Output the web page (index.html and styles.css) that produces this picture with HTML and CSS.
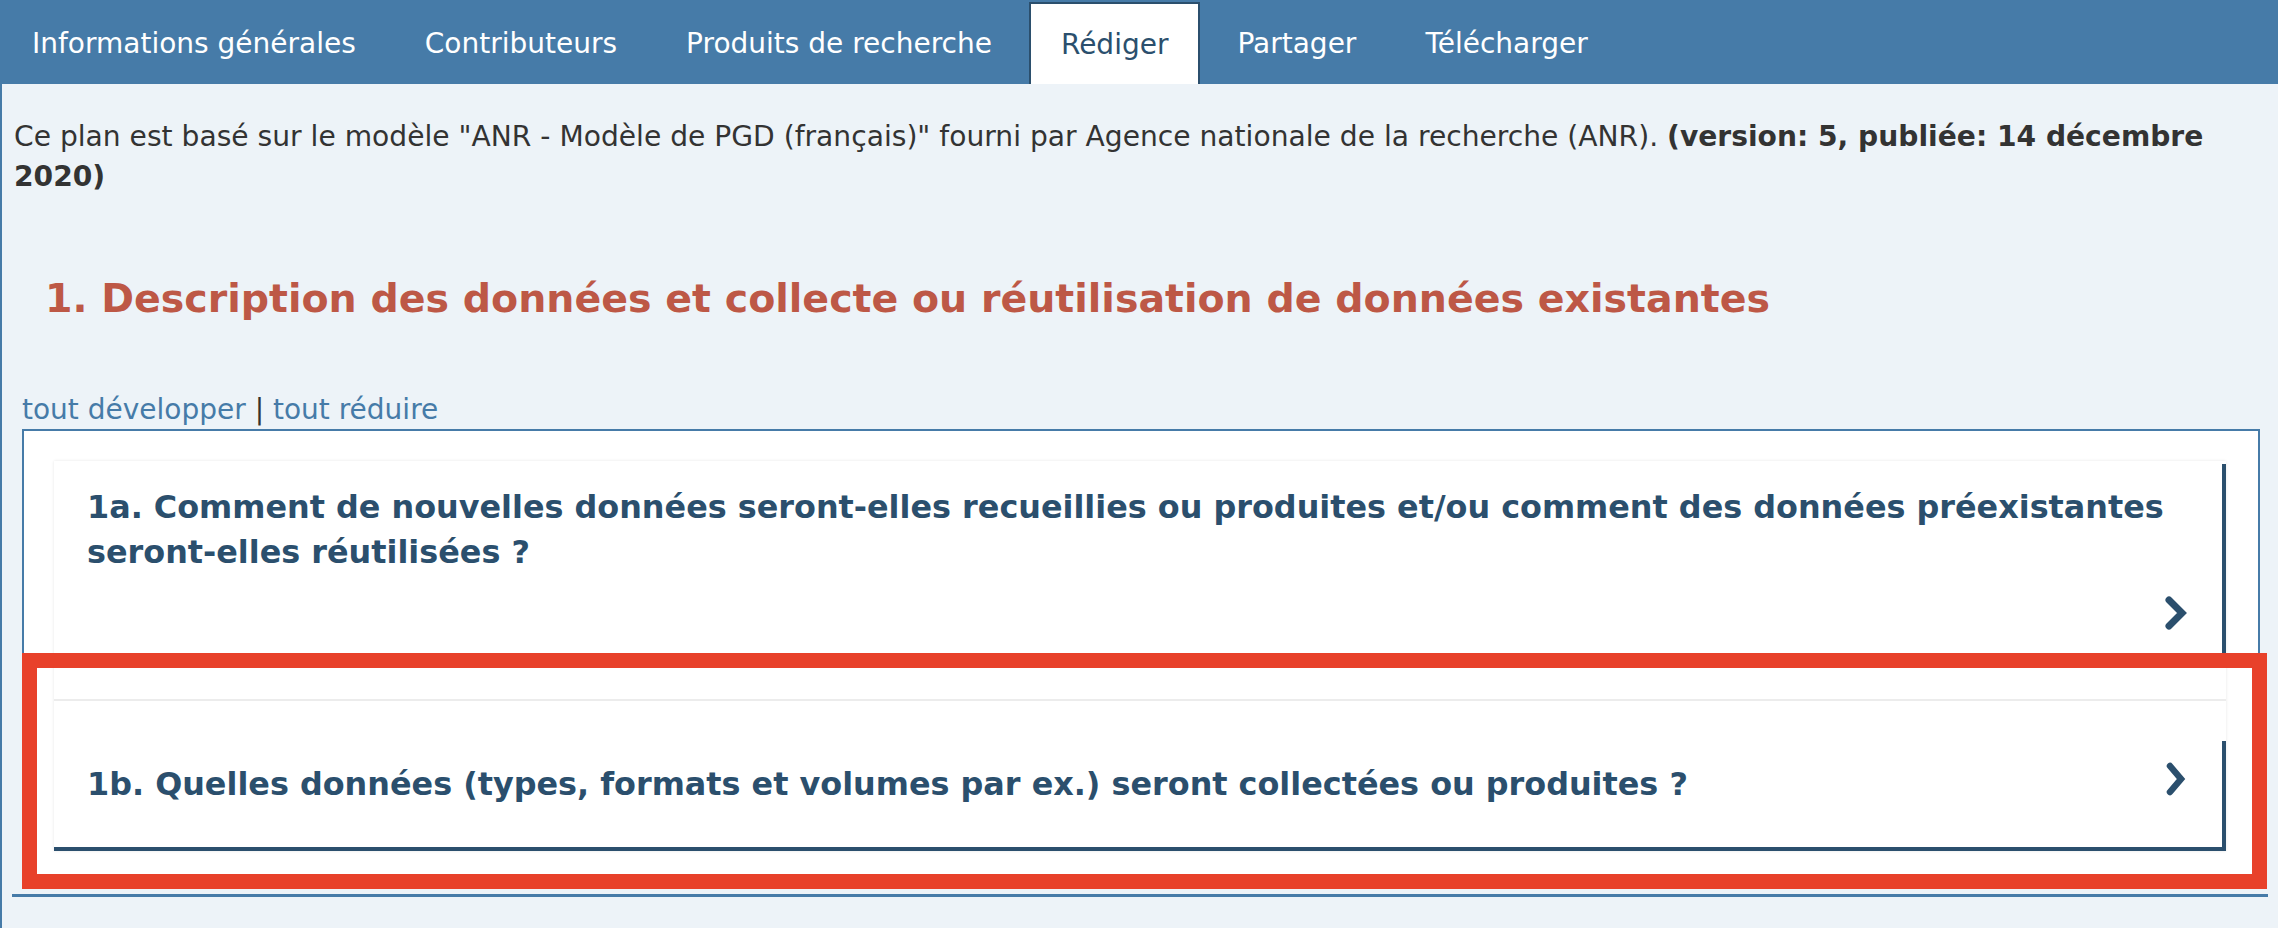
FILE: index.html
```html
<!DOCTYPE html>
<html lang="fr">
<head>
<meta charset="utf-8">
<title>Rédiger</title>
<link rel="stylesheet" href="styles.css">
</head>
<body>
<nav class="tabs">
  <a class="tab">Informations générales</a>
  <a class="tab">Contributeurs</a>
  <a class="tab">Produits de recherche</a>
  <a class="tab active">Rédiger</a>
  <a class="tab">Partager</a>
  <a class="tab">Télécharger</a>
</nav>
<main class="content">
  <p class="intro">Ce plan est basé sur le modèle "ANR - Modèle de PGD (français)" fourni par Agence nationale de la recherche (ANR). <strong>(version: 5, publiée: 14 décembre</strong> <strong>2020)</strong></p>
  <h2 class="section-title">1. Description des données et collecte ou réutilisation de données existantes</h2>
  <div class="toggles"><a class="link">tout développer</a> <span class="sep">|</span> <a class="link">tout réduire</a></div>
  <div class="panel">
    <div class="card card-a">
      <div class="row row-a">
        <h3 class="question">1a. Comment de nouvelles données seront-elles recueillies ou produites et/ou comment des données préexistantes seront-elles réutilisées ?</h3>
        <div class="chev-wrap">
          <svg class="chev" width="24" height="36" viewBox="0 0 24 36"><polyline points="5,5 18,18 5,31" fill="none" stroke="#2b4f6d" stroke-width="7" stroke-linecap="round" stroke-linejoin="miter"/></svg>
        </div>
      </div>
    </div>
    <div class="card card-b">
      <div class="card-head">
        <div class="row row-b">
          <h3 class="question">1b. Quelles données (types, formats et volumes par ex.) seront collectées ou produites ?</h3>
          <svg class="chev" width="24" height="36" viewBox="0 0 24 36"><polyline points="6,5 17,18 6,31" fill="none" stroke="#2b4f6d" stroke-width="6.5" stroke-linecap="round" stroke-linejoin="miter"/></svg>
        </div>
      </div>
    </div>
  </div>
  <div class="rule"></div>
</main>
<div class="highlight"></div>
</body>
</html>
```
FILE: styles.css
```css
html, body {
  margin: 0;
  padding: 0;
}
body {
  font-family: "DejaVu Sans", Verdana, sans-serif;
  background: #edf3f8;
  width: 2278px;
  height: 928px;
  overflow: hidden;
  position: relative;
}
.tabs {
  display: flex;
  align-items: flex-end;
  gap: 5px;
  height: 84px;
  background: #467ba8;
}
.tab {
  display: flex;
  align-items: center;
  height: 82px;
  padding: 0 32px;
  font-size: 28px;
  color: #ffffff;
  box-sizing: border-box;
  white-space: nowrap;
}
.tab.active {
  background: #ffffff;
  color: #2b4f6d;
  border: 2px solid #2b4f6d;
  border-bottom: none;
  padding: 0 30px;
}
.content {
  border-left: 2px solid #467ba8;
  padding: 33px 10px 0 12px;
  height: 844px;
  box-sizing: border-box;
}
.intro {
  margin: 0;
  font-size: 28.15px;
  line-height: 40px;
  color: #333333;
}
.intro strong {
  font-weight: bold;
}
.section-title {
  margin: 77px 0 0 31px;
  font-size: 39.5px;
  line-height: 48px;
  font-weight: bold;
  color: #bd5846;
}
.toggles {
  margin: 69px 0 0 8px;
  font-size: 28px;
  line-height: 38px;
  color: #333333;
}
.link {
  color: #467ba8;
}
.sep {
  color: #333333;
}
.panel {
  margin: 0 8px 0 8px;
  background: #ffffff;
  border: 2px solid #467ba8;
  padding: 30px 32px 26px 30px;
}
.card {
  box-shadow: 0 0 3px rgba(0, 0, 0, 0.10);
  background: #ffffff;
}
.card-a {
  padding-top: 3px;
}
.row {
  border-right: 4px solid #2b4f6d;
  border-bottom: 4px solid #2b4f6d;
  padding: 21px 34px 0 33px;
}
.row-a {
  padding-bottom: 26px;
}
.question {
  margin: 0;
  font-size: 31.85px;
  line-height: 45px;
  font-weight: bold;
  color: #2b4f6d;
}
.chev-wrap {
  display: flex;
  justify-content: flex-end;
  margin-top: 20px;
}
.chev {
  display: block;
  flex: none;
}
.card-b {
  margin-top: 2px;
  padding-top: 36px;
}
.card-head {
  border-top: 2px solid #ececec;
  padding-top: 40px;
}
.row-b {
  display: flex;
  justify-content: space-between;
  align-items: flex-start;
  padding-bottom: 40px;
}
.row-b .chev {
  margin-top: -1px;
}
.rule {
  height: 3px;
  background: #467ba8;
  margin: 15px 0 0 -2px;
}
.highlight {
  position: absolute;
  left: 22px;
  top: 653px;
  width: 2245px;
  height: 236px;
  box-sizing: border-box;
  border: 15px solid #e8412a;
  pointer-events: none;
}
```
